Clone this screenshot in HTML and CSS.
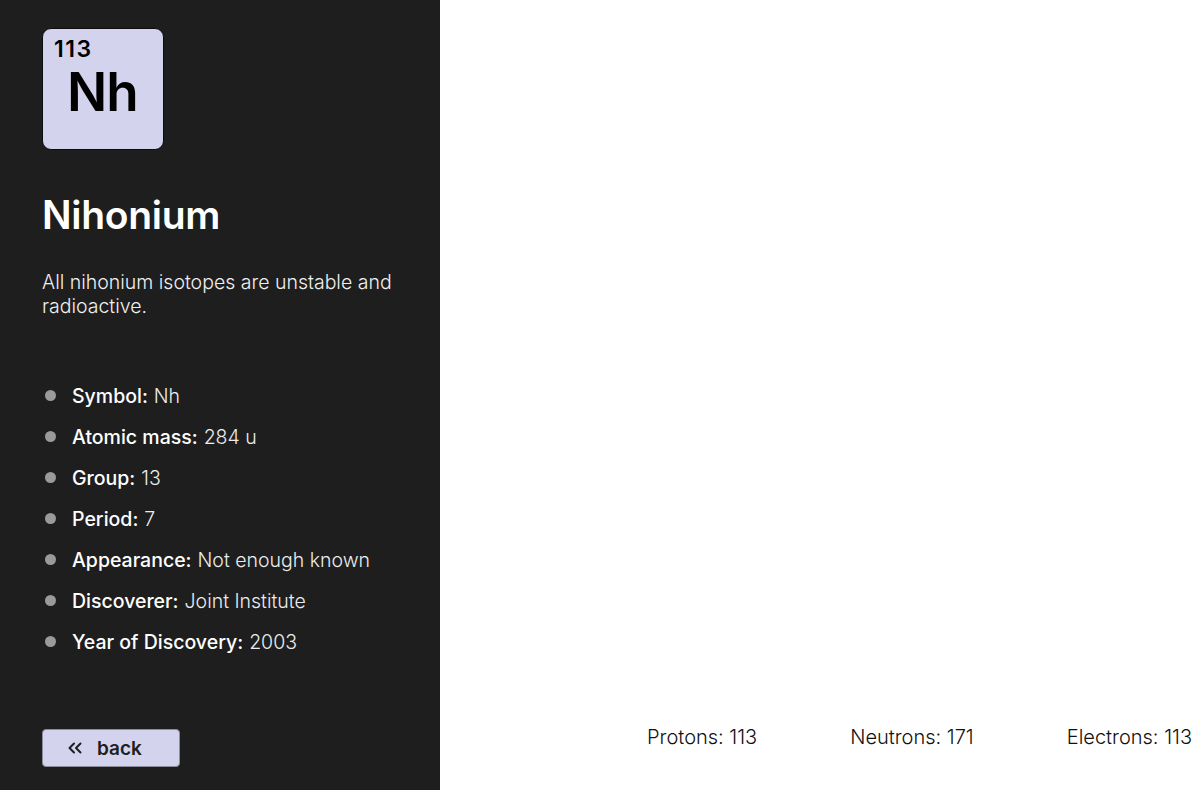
FILE: index.html
```html
<!DOCTYPE html>
<html lang="en">
<head>
    <meta charset="UTF-8">
    <meta name="viewport" content="width=device-width, initial-scale=1.0">
    <title>Nihonium</title>
    <link rel="stylesheet" href="styles.css">
</head>
<body>
    <div class="page">
        <aside class="sidebar">
            <div class="tile">
                <span class="tile-number">113</span>
                <span class="tile-symbol">Nh</span>
            </div>
            <h1 class="name">Nihonium</h1>
            <p class="summary">All nihonium isotopes are unstable and radioactive.</p>
            <ul class="facts">
                <li><b>Symbol:</b> Nh</li>
                <li><b>Atomic mass:</b> 284 u</li>
                <li><b>Group:</b> 13</li>
                <li><b>Period:</b> 7</li>
                <li><b>Appearance:</b> Not enough known</li>
                <li><b>Discoverer:</b> Joint Institute</li>
                <li><b>Year of Discovery:</b> 2003</li>
            </ul>
            <button class="back" type="button">
                <svg width="14" height="14" viewBox="0 0 14 14" fill="none" stroke="#1e1e1e" stroke-width="2" stroke-linecap="round" stroke-linejoin="round">
                    <path d="M6 2.5 L1.5 7 L6 11.5"/>
                    <path d="M12.5 2.5 L8 7 L12.5 11.5"/>
                </svg>
                <span>back</span>
            </button>
        </aside>
        <main class="stage">
            <div class="counts">
                <span>Protons: 113</span>
                <span>Neutrons: 171</span>
                <span>Electrons: 113</span>
            </div>
        </main>
    </div>
</body>
</html>
```

FILE: styles.css
```css
body {
    margin: 0;
    font-family: Inter, "Noto Sans", sans-serif;
    background-color: #fff;
}
.page {
    display: flex;
    height: 790px;
}
.sidebar {
    width: 440px;
    flex-shrink: 0;
    box-sizing: border-box;
    padding: 28px 42px 23px;
    background-color: #1e1e1e;
    color: #fff;
    display: flex;
    flex-direction: column;
    align-items: flex-start;
}
.tile {
    width: 122px;
    height: 122px;
    box-sizing: border-box;
    border: 1.5px solid #0c0c0c;
    border-radius: 9px;
    background-color: #d3d3ee;
    color: #000;
    display: flex;
    flex-direction: column;
    padding: 8px 0 0 11px;
}
.tile-number {
    font-size: 23px;
    font-weight: 600;
    line-height: 24px;
    letter-spacing: 1.5px;
}
.tile-symbol {
    font-size: 53px;
    font-weight: 600;
    line-height: 54px;
    margin: 4px 0 0 13px;
    letter-spacing: -1px;
}
.name {
    margin: 41px 0 0;
    font-size: 39px;
    font-weight: 600;
    line-height: 48px;
    letter-spacing: -0.3px;
}
.summary {
    margin: 31px 0 0;
    font-size: 19.5px;
    font-weight: 300;
    line-height: 24px;
    color: #f0f0f0;
}
.facts {
    list-style: none;
    margin: 66px 0 0;
    padding: 0;
    font-size: 19.5px;
    font-weight: 300;
    line-height: 24px;
    color: #ececec;
}
.facts li {
    display: flex;
    align-items: center;
    margin-bottom: 17px;
}
.facts li::before {
    content: "";
    width: 11px;
    height: 11px;
    border-radius: 50%;
    background-color: #9a9a9a;
    margin: 0 16px 2px 3px;
}
.facts b {
    font-weight: 500;
    color: #fff;
    margin-right: 6px;
}
.back {
    margin-top: auto;
    width: 138px;
    height: 38px;
    display: flex;
    align-items: center;
    gap: 15px;
    padding: 0 0 0 25px;
    background-color: #d3d3ee;
    border: 1px solid #8d8d9c;
    border-radius: 4px;
    font-family: inherit;
    font-size: 19px;
    font-weight: 600;
    color: #1e1e1e;
    cursor: pointer;
}
.stage {
    flex: 1;
    display: flex;
    flex-direction: column;
    justify-content: flex-end;
}
.counts {
    display: flex;
    justify-content: flex-end;
    gap: 93px;
    padding: 0 2px 41px 0;
    font-size: 20px;
    font-weight: 300;
    line-height: 24px;
    color: #111;
}
```
